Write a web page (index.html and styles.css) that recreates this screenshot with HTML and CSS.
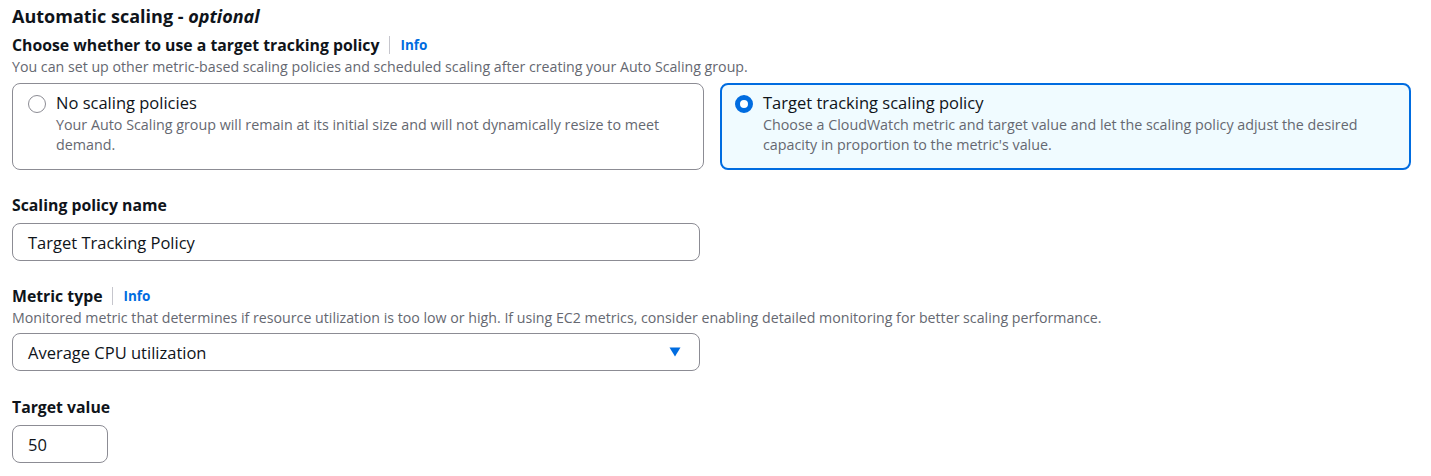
FILE: index.html
```html
<!DOCTYPE html>
<html>
<head>
<meta charset="utf-8">
<link rel="stylesheet" href="styles.css">
</head>
<body>
<div class="page">
  <h2 class="section-title">Automatic scaling - <i>optional</i></h2>
  <div class="field first">
    <div class="label-row"><span class="label">Choose whether to use a target tracking policy</span><span class="sep"></span><a class="info">Info</a></div>
    <div class="desc">You can set up other metric-based scaling policies and scheduled scaling after creating your Auto Scaling group.</div>
    <div class="tiles">
      <div class="tile">
        <span class="radio"></span>
        <div class="tile-text">
          <div class="tile-title">No scaling policies</div>
          <div class="tile-desc">Your Auto Scaling group will remain at its initial size and will not dynamically resize to meet demand.</div>
        </div>
      </div>
      <div class="tile selected">
        <span class="radio checked"></span>
        <div class="tile-text">
          <div class="tile-title">Target tracking scaling policy</div>
          <div class="tile-desc">Choose a CloudWatch metric and target value and let the scaling policy adjust the desired capacity in proportion to the metric's value.</div>
        </div>
      </div>
    </div>
  </div>

  <div class="field gap-top">
    <div class="label-row"><span class="label">Scaling policy name</span></div>
    <div class="input wide">Target Tracking Policy</div>
  </div>

  <div class="field gap-top">
    <div class="label-row"><span class="label">Metric type</span><span class="sep"></span><a class="info">Info</a></div>
    <div class="desc">Monitored metric that determines if resource utilization is too low or high. If using EC2 metrics, consider enabling detailed monitoring for better scaling performance.</div>
    <div class="input wide select">
      <span>Average CPU utilization</span>
      <svg class="caret" width="12" height="10" viewBox="0 0 12 10"><path d="M0.5 0.5 H11.5 L6 9.5 Z" fill="#006ce0"/></svg>
    </div>
  </div>

  <div class="field gap-top last">
    <div class="label-row"><span class="label">Target value</span></div>
    <div class="input small">50</div>
  </div>
</div>
</body>
</html>
```

FILE: styles.css
```css
* { box-sizing: border-box; }
body {
  margin: 0;
  background: #ffffff;
  font-family: "Open Sans", "Noto Sans", Arial, sans-serif;
  color: #0f141a;
}
.page {
  padding: 4px 0 0 12px;
  width: 1410px;
}
.section-title {
  margin: 0;
  font-size: 18px;
  line-height: 24px;
  font-weight: 700;
}
.section-title i { font-weight: 700; }
.field { display: flex; flex-direction: column; }
.first { margin-top: 6px; }
.gap-top { margin-top: 24px; }
.gap-top.last { margin-top: 25px; }
.label-row {
  display: flex;
  align-items: center;
  height: 22px;
}
.label {
  font-size: 15.8px;
  font-weight: 700;
  line-height: 22px;
}
.sep {
  width: 1px;
  height: 18px;
  background: #c6c6cd;
  margin: 0 10px;
}
.info {
  font-size: 13.5px;
  font-weight: 700;
  color: #006ce0;
}
.desc {
  font-size: 14.2px;
  line-height: 18px;
  color: #656871;
  margin-top: 2px;
}
.tiles {
  display: grid;
  grid-template-columns: 692px 691px;
  column-gap: 16px;
  margin-top: 7px;
}
.tile {
  display: flex;
  align-items: flex-start;
  border: 1px solid #8c8c94;
  border-radius: 8px;
  padding: 8px 16px 14px 15px;
}
.tile.selected {
  border: 2px solid #006ce0;
  background: #f0fbff;
  padding: 7px 15px 13px 13px;
}
.radio {
  flex: none;
  width: 18px;
  height: 18px;
  border: 1px solid #8c8c94;
  border-radius: 50%;
  margin-top: 3px;
  margin-right: 10px;
  background: #fff;
}
.radio.checked {
  border: 5px solid #006ce0;
}
.tile-title {
  font-size: 16.5px;
  line-height: 22px;
}
.tile-desc {
  font-size: 14.3px;
  line-height: 20px;
  margin-top: 1px;
  color: #656871;
}
.input {
  margin-top: 7px;
  height: 38px;
  border: 1px solid #8c8c94;
  border-radius: 8px;
  display: flex;
  align-items: center;
  padding: 0 15px;
  font-size: 16.5px;
}
.wide { width: 688px; }
.small { width: 96px; }
.select { justify-content: space-between; }
.caret { margin-right: 3px; }
.desc + .input { margin-top: 6px; }
```
